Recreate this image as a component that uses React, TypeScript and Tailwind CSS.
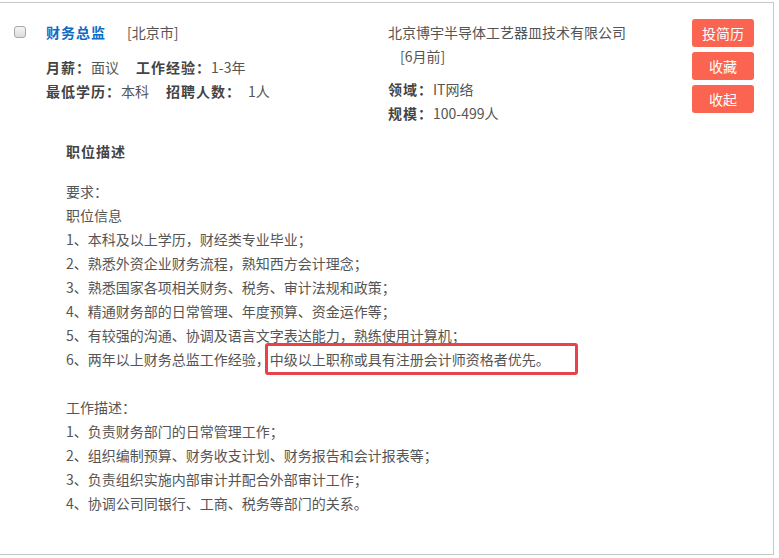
import React from "react";

const requirements = [
  "1、本科及以上学历，财经类专业毕业；",
  "2、熟悉外资企业财务流程，熟知西方会计理念；",
  "3、熟悉国家各项相关财务、税务、审计法规和政策；",
  "4、精通财务部的日常管理、年度预算、资金运作等；",
  "5、有较强的沟通、协调及语言文字表达能力，熟练使用计算机；",
];

const duties = [
  "1、负责财务部门的日常管理工作；",
  "2、组织编制预算、财务收支计划、财务报告和会计报表等；",
  "3、负责组织实施内部审计并配合外部审计工作；",
  "4、协调公司同银行、工商、税务等部门的关系。",
];

function Label({ children }: { children: React.ReactNode }) {
  return <span className="font-bold tracking-[1px] text-[#444]">{children}</span>;
}

export default function App() {
  return (
    <div
      className="w-[779px] h-[558px] bg-white text-[14px] leading-[24px] text-[#555]"
      style={{ fontFamily: "'Noto Sans CJK SC', sans-serif" }}
    >
      <div className="mt-[2px] w-[774px] h-[553px] border-t border-r border-b border-[#c8c8c8]">
        {/* header */}
        <div className="flex pt-[16px] pl-[14px]">
          <div className="mt-[7px] w-[12px] h-[12px] rounded-[3px] border border-[#a9a9a9] bg-gradient-to-b from-[#f4f4f4] to-[#dcdcdc]" />

          <div className="ml-[20px] w-[342px] mt-[1px]">
            <div className="flex">
              <span className="font-bold tracking-[1px] text-[#0f6cc6]">财务总监</span>
              <span className="ml-[21px]">[北京市]</span>
            </div>
            <div className="flex mt-[11px]">
              <div className="w-[90px]">
                <Label>月薪：</Label>面议
              </div>
              <div>
                <Label>工作经验：</Label>1-3年
              </div>
            </div>
            <div className="flex">
              <div className="w-[120px]">
                <Label>最低学历：</Label>本科
              </div>
              <div>
                <Label>招聘人数：</Label>
                <span className="ml-[7px]">1人</span>
              </div>
            </div>
          </div>

          <div className="w-[304px] mt-[1px]">
            <div>北京博宇半导体工艺器皿技术有限公司</div>
            <div className="pl-[12px]">[6月前]</div>
            <div className="mt-[9px]">
              <Label>领域：</Label>IT网络
            </div>
            <div>
              <Label>规模：</Label>100-499人
            </div>
          </div>

          <div className="flex flex-col gap-[5px]">
            {["投简历", "收藏", "收起"].map((b) => (
              <button
                key={b}
                className="w-[62px] h-[28px] rounded-[3px] bg-[#fa6451] text-white text-[14px] leading-[28px] text-center"
              >
                {b}
              </button>
            ))}
          </div>
        </div>

        {/* description */}
        <div className="pl-[66px] mt-[14px]">
          <div className="font-bold tracking-[1px] text-[#444]">职位描述</div>
          <div className="mt-[16px]">
            <div>要求：</div>
            <div>职位信息</div>
            {requirements.map((r) => (
              <div key={r}>{r}</div>
            ))}
            <div className="flex h-[24px]">
              <span>6、两年以上财务总监工作经验，</span>
              <span className="relative block">
                中级以上职称或具有注册会计师资格者优先。
                <span className="absolute -top-[4px] -bottom-[4px] -left-[5px] -right-[28px] border-[3px] border-[#e8434b] rounded-[3px]" />
              </span>
            </div>
            <div className="h-[24px]" />
            <div>工作描述：</div>
            {duties.map((d) => (
              <div key={d}>{d}</div>
            ))}
          </div>
        </div>
      </div>
    </div>
  );
}
